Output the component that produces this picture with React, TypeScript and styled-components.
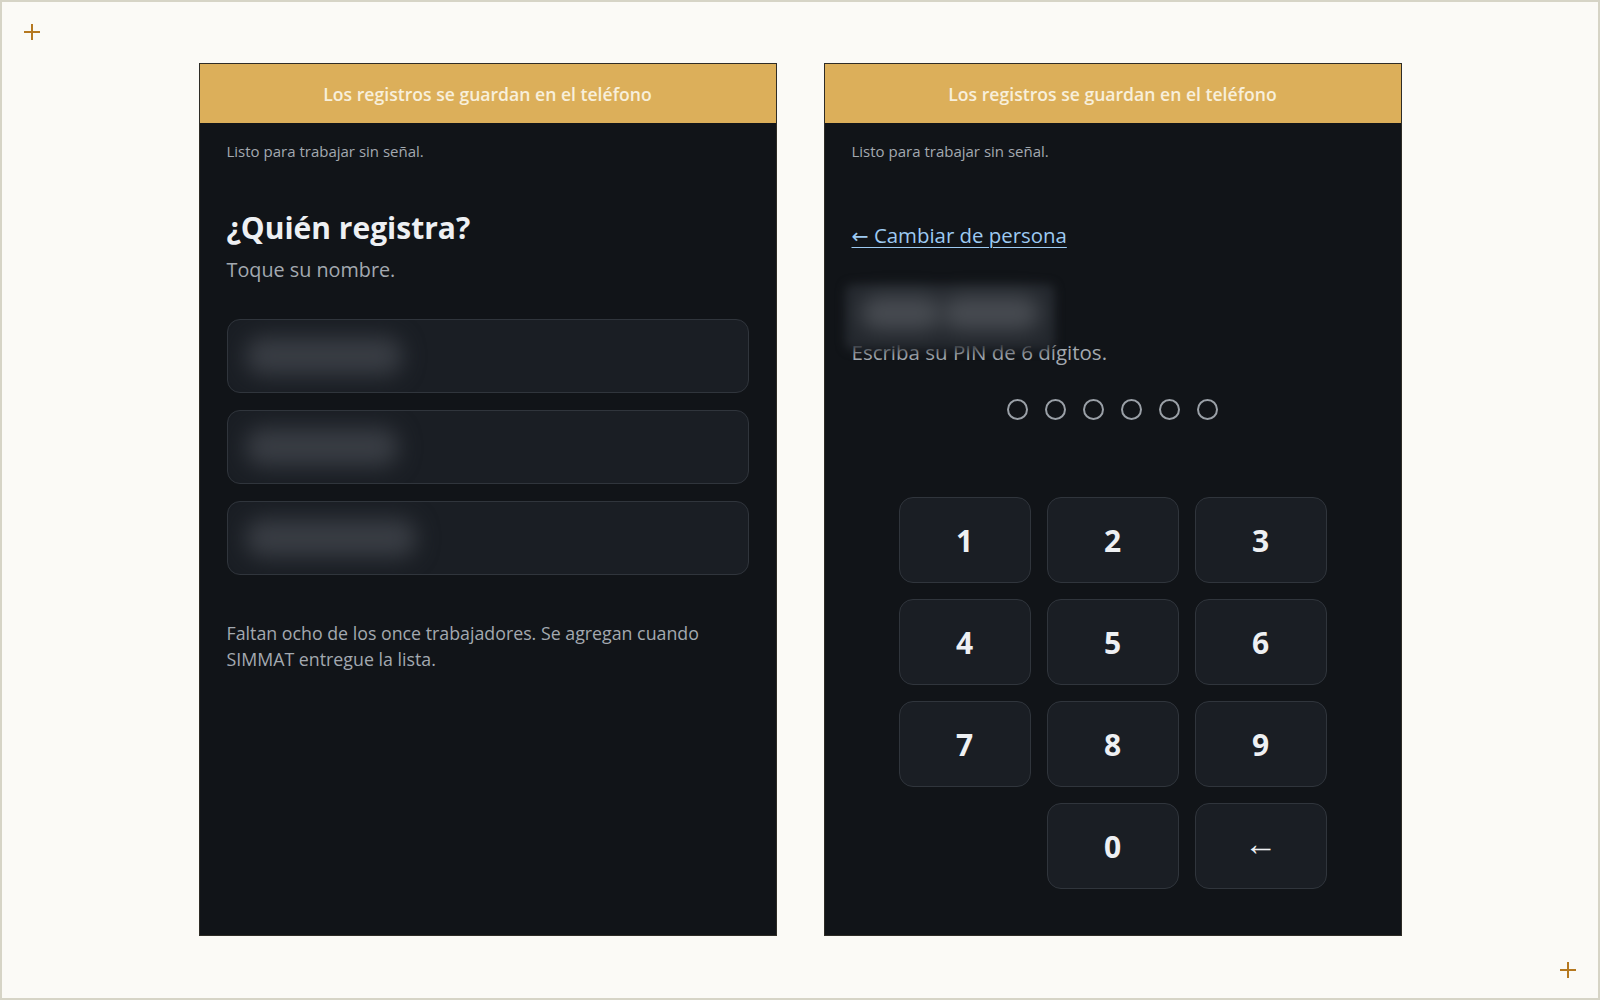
import styled, { createGlobalStyle } from "styled-components";

const GlobalStyle = createGlobalStyle`
  * { box-sizing: border-box; }
  html, body { margin: 0; padding: 0; }
  body {
    background: #fbfaf6;
    font-family: "Open Sans", "Noto Sans", "DejaVu Sans", sans-serif;
  }
`;

const ui = {
    page: "#fbfaf6",
    frame: "#d6d4c6",
    gold: "#dcaf5a",
    goldText: "#f8efdb",
    panel: "#111418",
    card: "#1a1e24",
    cardBorder: "#30353c",
    text: "#eef0f3",
    muted: "#a3a9b0",
    link: "#9dcaf2",
    accent: "#b5781f",
};

const Cross = ({ $corner }: { $corner: "tl" | "br" }) => (
    <Marker $corner={$corner} width="18" height="18" viewBox="0 0 18 18">
        <path d="M9 1v16M1 9h16" stroke={ui.accent} strokeWidth="2" fill="none" />
    </Marker>
);

// widths of the blurred (redacted) names in the worker list
const workers = [156, 152, 170];

const App = () => {
    const keys = ["1", "2", "3", "4", "5", "6", "7", "8", "9", "", "0", "←"];

    return (
        <>
            <GlobalStyle />
            <Page>
                <Cross $corner="tl" />
                <Cross $corner="br" />
                <Screens>
                    <Phone>
                        <Banner>Los registros se guardan en el teléfono</Banner>
                        <Body>
                            <Status>Listo para trabajar sin señal.</Status>
                            <Title>¿Quién registra?</Title>
                            <Subtitle>Toque su nombre.</Subtitle>
                            <WorkerList>
                                {workers.map((w, i) => (
                                    <WorkerCard key={i}>
                                        <NameBlob style={{ width: w }} />
                                    </WorkerCard>
                                ))}
                            </WorkerList>
                            <Note>
                                Faltan ocho de los once trabajadores. Se agregan cuando SIMMAT
                                entregue la lista.
                            </Note>
                        </Body>
                    </Phone>

                    <Phone>
                        <Banner>Los registros se guardan en el teléfono</Banner>
                        <Body>
                            <Status>Listo para trabajar sin señal.</Status>
                            <BackLink href="#">← Cambiar de persona</BackLink>
                            <PersonName>
                                <Redaction>
                                    <RedactedWord $w={84} />
                                    <RedactedWord $w={100} />
                                </Redaction>
                            </PersonName>
                            <Prompt>Escriba su PIN de 6 dígitos.</Prompt>
                            <Dots>
                                {Array.from({ length: 6 }).map((_, i) => (
                                    <Dot key={i} />
                                ))}
                            </Dots>
                            <Keypad>
                                {keys.map((k, i) =>
                                    k === "" ? (
                                        <span key={i} />
                                    ) : (
                                        <Key key={i} $thin={k === "←"}>
                                            {k}
                                        </Key>
                                    )
                                )}
                            </Keypad>
                        </Body>
                    </Phone>
                </Screens>
            </Page>
        </>
    );
};

const Page = styled.div`
  position: relative;
  min-height: 100vh;
  height: 1000px;
  border: 2px solid ${ui.frame};
  background: ${ui.page};
`;

const Marker = styled.svg<{ $corner: "tl" | "br" }>`
  position: absolute;
  ${p => (p.$corner === "tl" ? "left: 21px; top: 21px;" : "right: 21px; bottom: 19px;")}
`;

const Screens = styled.main`
  display: flex;
  justify-content: center;
  gap: 47px;
  padding-top: 61px;
`;

const Phone = styled.section`
  display: flex;
  flex-direction: column;
  width: 578px;
  height: 873px;
  background: ${ui.panel};
  border: 1px solid rgba(90, 80, 60, 0.4);
`;

const Banner = styled.header`
  height: 59px;
  display: flex;
  align-items: center;
  justify-content: center;
  background: ${ui.gold};
  color: ${ui.goldText};
  font-size: 17.6px;
  font-weight: 600;
`;

const Body = styled.div`
  display: flex;
  flex-direction: column;
  padding: 18px 27px 0;
`;

const Status = styled.p`
  margin: 0;
  font-size: 15px;
  line-height: 20px;
  color: ${ui.muted};
`;

const Title = styled.h1`
  margin: 48px 0 0;
  font-size: 30px;
  line-height: 38px;
  font-weight: 700;
  color: ${ui.text};
`;

const Subtitle = styled.p`
  margin: 9px 0 0;
  font-size: 19.8px;
  line-height: 28px;
  color: ${ui.muted};
`;

const WorkerList = styled.div`
  display: flex;
  flex-direction: column;
  gap: 17px;
  margin-top: 35px;
`;

const WorkerCard = styled.button`
  display: flex;
  align-items: center;
  height: 74px;
  padding: 0 18px;
  background: ${ui.card};
  border: 1px solid ${ui.cardBorder};
  border-radius: 13px;
  overflow: hidden;
`;

const NameBlob = styled.span`
  display: block;
  height: 38px;
  border-radius: 16px;
  background: #393d44;
  filter: blur(11px);
`;

const Note = styled.p`
  margin: 45px 0 0;
  font-size: 17.8px;
  line-height: 26px;
  color: ${ui.muted};
`;

const BackLink = styled.a`
  align-self: flex-start;
  margin-top: 60px;
  font-size: 20.4px;
  line-height: 28px;
  color: ${ui.link};
  text-decoration: underline;
  text-underline-offset: 4px;
  text-decoration-thickness: 1px;
`;

const PersonName = styled.div`
  position: relative;
  height: 36px;
  margin-top: 41px;
`;

const Redaction = styled.div`
  position: absolute;
  left: -7px;
  top: -6px;
  width: 210px;
  height: 66px;
  z-index: 2;
  display: flex;
  align-items: center;
  gap: 0;
  padding: 0 16px 8px;
  background: #24282e;
  border-radius: 8px;
  filter: blur(5px);
`;

const RedactedWord = styled.span<{ $w: number }>`
  width: ${p => p.$w}px;
  height: 34px;
  border-radius: 16px;
  background: #474b51;
  filter: blur(9px);
`;

const Prompt = styled.p`
  margin: 12px 0 0;
  font-size: 20.5px;
  line-height: 28px;
  color: ${ui.muted};
`;

const Dots = styled.div`
  display: flex;
  justify-content: center;
  gap: 17px;
  margin-top: 33px;
`;

const Dot = styled.span`
  width: 21px;
  height: 21px;
  border-radius: 50%;
  border: 2px solid #9aa0a7;
`;

const Keypad = styled.div`
  display: grid;
  grid-template-columns: repeat(3, 132px);
  grid-auto-rows: 86px;
  gap: 16px;
  justify-content: center;
  margin-top: 77px;
`;

const Key = styled.button<{ $thin?: boolean }>`
  display: flex;
  align-items: center;
  justify-content: center;
  padding: ${p => (p.$thin ? "0 0 7px" : "2px 0 0")};
  background: ${ui.card};
  border: 1px solid ${ui.cardBorder};
  border-radius: 14px;
  color: ${ui.text};
  font-family: "Open Sans", "Noto Sans", sans-serif;
  font-size: ${p => (p.$thin ? "33px" : "30px")};
  font-weight: ${p => (p.$thin ? 400 : 700)};
  line-height: 1;
`;

export default App;
